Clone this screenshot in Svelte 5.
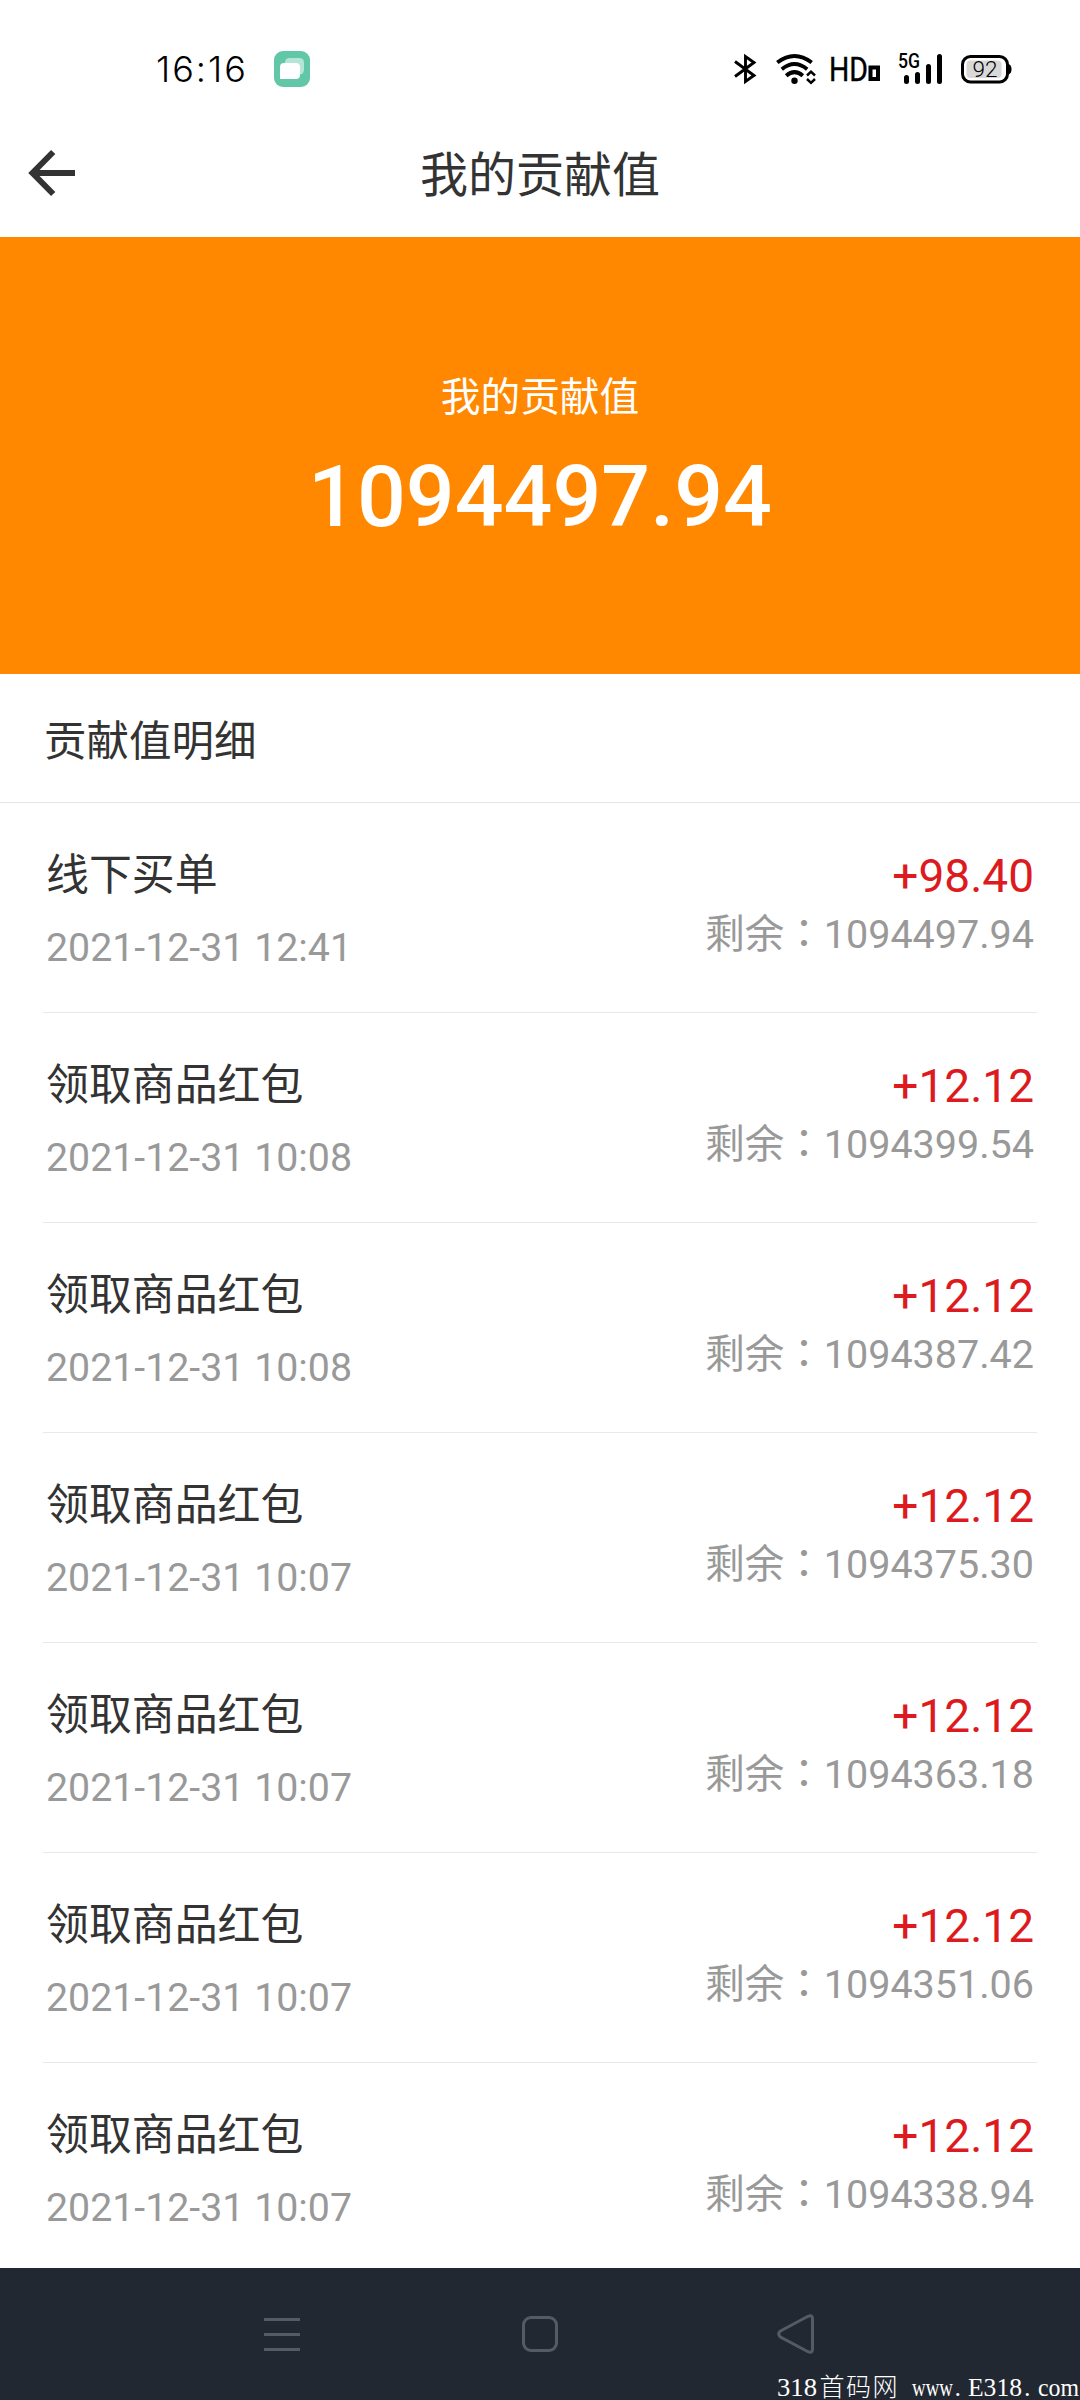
<script>
  const rows = [
    { title: '线下买单', time: '2021-12-31 12:41', amount: '+98.40', left: '1094497.94' },
    { title: '领取商品红包', time: '2021-12-31 10:08', amount: '+12.12', left: '1094399.54' },
    { title: '领取商品红包', time: '2021-12-31 10:08', amount: '+12.12', left: '1094387.42' },
    { title: '领取商品红包', time: '2021-12-31 10:07', amount: '+12.12', left: '1094375.30' },
    { title: '领取商品红包', time: '2021-12-31 10:07', amount: '+12.12', left: '1094363.18' },
    { title: '领取商品红包', time: '2021-12-31 10:07', amount: '+12.12', left: '1094351.06' },
    { title: '领取商品红包', time: '2021-12-31 10:07', amount: '+12.12', left: '1094338.94' }
  ];
</script>

<div class="screen">
  <div class="status">
    <span class="clock">16:16</span>
    <svg class="app" width="36" height="36" viewBox="0 0 36 36">
      <rect width="36" height="36" rx="9" fill="#62c7a6" />
      <rect x="11" y="7" width="19" height="16.500" rx="4.500" fill="#b5e5d5" />
      <path d="M10 12h12a4 4 0 0 1 4 4v8a4 4 0 0 1-4 4H6V16a4 4 0 0 1 4-4z" fill="#fff" />
    </svg>
    <div class="indicators">
      <svg width="22" height="30" viewBox="0 0 22 30" fill="none" stroke="#000" stroke-width="2.900">
        <path d="M1 7.500L20 21.500L11.500 27.500V2.500L20 8.500L1 22.500" />
      </svg>
      <svg class="wifi" width="41" height="30" viewBox="0 0 41 30" fill="none" stroke="#000" stroke-width="3.900">
        <path d="M1.300 8.500Q18.500-4.500 35.700 8.500M5.800 15.200Q18.500 5 31.200 15.200M10.200 21.700Q18.500 14.500 26.800 21.700" />
        <circle cx="18.500" cy="26.800" r="3.200" fill="#000" stroke="none" />
        <path d="M31 21.500l4-3.800 4 3.800M31 25l4 3.800 4-3.800" stroke-width="2.500" />
      </svg>
      <svg class="hd" width="50" height="46" viewBox="0 -8 50 46">
        <text x="-2" y="26.500" font-size="33.500" textLength="39" lengthAdjust="spacingAndGlyphs" stroke="#000" stroke-width="0.400">HD</text>
        <rect x="39.500" y="13.500" width="7.500" height="11.500" fill="none" stroke="#000" stroke-width="4" />
      </svg>
      <svg class="cell" width="44" height="46" viewBox="0 -8 44 46">
        <text x="-1" y="14" font-size="19.500" font-weight="500" textLength="22" lengthAdjust="spacingAndGlyphs">5G</text>
        <path d="M7.500 23.500v4M18.500 20.500v7M29.500 12.500v15M40.500 2.500v25" stroke="#000" stroke-width="5" stroke-linecap="round" />
      </svg>
      <svg class="battery" width="51" height="29" viewBox="0 0 51 29">
        <rect x="1.500" y="1.500" width="45" height="25.500" rx="8" fill="#fff" stroke="#000" stroke-width="3" />
        <rect x="5.500" y="5.500" width="35" height="17.500" rx="4" fill="#d8d8d8" />
        <path d="M47.500 9q3 1 3 5.200t-3 5.200z" />
        <text x="11.500" y="22" font-size="22" font-weight="300" textLength="25" lengthAdjust="spacingAndGlyphs">92</text>
      </svg>
    </div>
  </div>

  <header>
    <svg class="back" width="46" height="46" viewBox="0 0 46 46" fill="none" stroke="#333" stroke-width="6">
      <path d="M24.200 2L3.500 23l20.700 21M4 23h42" />
    </svg>
    <h1>我的贡献值</h1>
  </header>

  <section class="hero">
    <div class="label">我的贡献值</div>
    <div class="total">1094497.94</div>
  </section>

  <h2>贡献值明细</h2>

  <ul>
    {#each rows as row}
      <li>
        <div class="info">
          <div class="name">{row.title}</div>
          <div class="time">{row.time}</div>
        </div>
        <div class="value">
          <div class="amount">{row.amount}</div>
          <div class="left">剩余：{row.left}</div>
        </div>
      </li>
    {/each}
  </ul>

  <nav>
    <svg width="36" height="40" viewBox="0 0 36 40" fill="none" stroke="#565a65" stroke-width="3">
      <path d="M0 5.500h36M0 20.500h36M0 35.500h36" />
    </svg>
    <svg class="home" width="36" height="40" viewBox="0 0 36 40" fill="none" stroke="#565a65" stroke-width="3">
      <rect x="1.500" y="3.500" width="33" height="33" rx="7.500" />
    </svg>
    <svg width="38" height="40" viewBox="0 0 38 40" fill="none" stroke="#565a65" stroke-width="3">
      <path d="M3 17.300L31 2.300Q35.500 0.500 35.500 5V35Q35.500 39.500 31 37.700L3 22.700Q0.500 20 3 17.300z" />
    </svg>
    <svg class="mark" width="304" height="44" viewBox="0 -10 304 44" fill="#fff">
      <text x="1" y="29.500" textLength="40" lengthAdjust="spacingAndGlyphs">318</text>
      <text class="site" x="43.500" y="30">首码网</text>
      <text x="136" y="29.500" textLength="41" lengthAdjust="spacingAndGlyphs">www</text>
      <text x="178.500" y="29.500">.</text>
      <text x="192" y="29.500" textLength="54" lengthAdjust="spacingAndGlyphs">E318</text>
      <text x="248" y="29.500">.</text>
      <text x="262" y="29.500" textLength="41" lengthAdjust="spacingAndGlyphs">com</text>
    </svg>
  </nav>
</div>

<style>
  :global(body) {
    margin: 0;
    background: #fff;
  }
  .screen {
    width: 1080px;
    height: 2400px;
    display: flex;
    flex-direction: column;
    overflow: hidden;
    background: #fff;
    color: #333;
    font-family: Roboto, 'Noto Sans CJK TC', sans-serif;
  }
  h1, h2, ul {
    margin: 0;
    padding: 0;
    font-weight: 400;
    font-family: Roboto, 'Noto Sans CJK SC', sans-serif;
  }
  svg {
    display: block;
    flex: none;
    overflow: visible;
  }
  .status {
    box-sizing: border-box;
    height: 138px;
    flex: none;
    display: flex;
    align-items: center;
    padding: 0 68px 0 156px;
  }
  .clock {
    width: 118px;
    font: 350 36px/44px Inter, sans-serif;
    letter-spacing: 2px;
    color: #000;
  }
  .indicators {
    margin-left: auto;
    display: flex;
    align-items: center;
  }
  .wifi { margin-left: 20px; }
  .hd { margin-left: 14px; }
  .cell { margin-left: 18px; }
  .battery { margin-left: 18px; }
  header {
    height: 99px;
    flex: none;
    display: grid;
    grid-template-columns: 240px 1fr 240px;
    align-items: start;
  }
  .back {
    margin: 12px 0 0 29px;
  }
  h1 {
    text-align: center;
    font-size: 48px;
    line-height: 76px;
  }
  .hero {
    box-sizing: border-box;
    height: 437px;
    flex: none;
    padding-top: 127px;
    background: #ff8800;
    color: #fff;
    text-align: center;
  }
  .label {
    font-family: 'Noto Sans CJK SC', sans-serif;
    font-size: 39.700px;
    line-height: 60px;
  }
  .total {
    margin-top: 21px;
    font-size: 86px;
    line-height: 104px;
    font-weight: 500;
  }
  h2 {
    box-sizing: border-box;
    height: 129px;
    flex: none;
    padding-left: 44px;
    border-bottom: 1px solid #e5e5e5;
    font-size: 42.500px;
    line-height: 136px;
  }
  ul {
    flex: 1;
    min-height: 0;
    overflow: hidden;
    list-style: none;
    padding: 0 43px;
  }
  li {
    box-sizing: border-box;
    height: 210px;
    display: flex;
    justify-content: space-between;
    padding: 40px 3px 0;
    border-bottom: 1px solid #e8e8e8;
  }
  .name {
    padding-top: 1px;
    font-size: 42.900px;
    line-height: 62px;
  }
  .time {
    margin-top: 14px;
    font-size: 39.300px;
    line-height: 56px;
    color: #999;
  }
  .value {
    text-align: right;
  }
  .amount {
    margin-top: 5px;
    font-size: 46px;
    line-height: 56px;
    color: #dc1a20;
  }
  .left {
    margin-top: 1px;
    font-family: Roboto, 'Noto Sans CJK TC', sans-serif;
    font-size: 39.500px;
    line-height: 60px;
    color: #999;
  }
  nav {
    position: relative;
    box-sizing: border-box;
    height: 132px;
    flex: none;
    display: flex;
    justify-content: space-between;
    padding: 46px 265px 0 264px;
    background: #222831;
  }
  .home {
    margin-left: 3px;
  }
  .mark {
    position: absolute;
    right: 0;
    bottom: 0;
    font: 26px 'Liberation Serif', serif;
  }
  .mark .site {
    font: 300 25px 'Noto Sans CJK SC', sans-serif;
    letter-spacing: 1.500px;
  }
</style>
